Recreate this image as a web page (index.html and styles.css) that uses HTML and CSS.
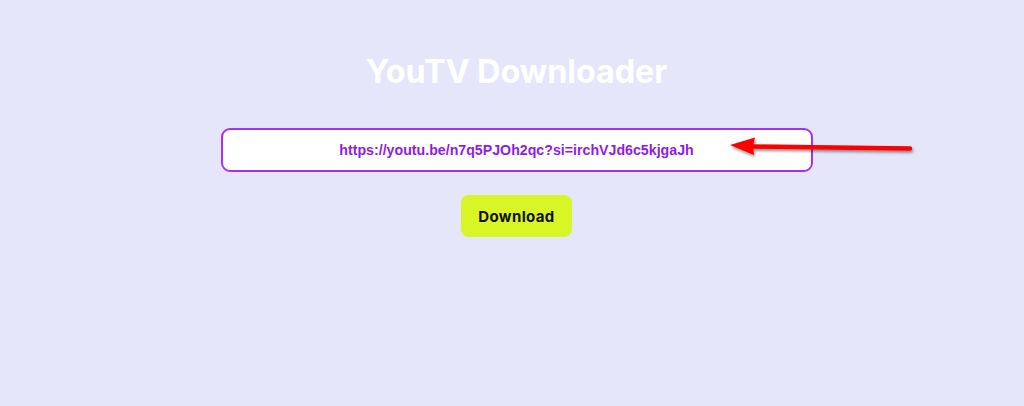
FILE: index.html
```html
<!DOCTYPE html>
<html>
<head>
<meta charset="utf-8">
<link rel="stylesheet" href="styles.css">
</head>
<body>
<main class="page">
  <h1 class="title">YouTV Downloader</h1>
  <div class="field-wrap">
    <div class="url-input">https://youtu.be/n7q5PJOh2qc?si=irchVJd6c5kjgaJh</div>
    <svg class="arrow" width="200" height="30" viewBox="0 0 200 30">
      <defs>
        <filter id="sh" x="-10%" y="-50%" width="120%" height="200%">
          <feGaussianBlur in="SourceAlpha" stdDeviation="1.5"/>
          <feOffset dx="1" dy="1.5" result="b"/>
          <feComponentTransfer><feFuncA type="linear" slope="0.45"/></feComponentTransfer>
          <feMerge><feMergeNode/><feMergeNode in="SourceGraphic"/></feMerge>
        </filter>
      </defs>
      <g filter="url(#sh)">
        <line x1="28" y1="14.5" x2="185" y2="16.5" stroke="#ff0000" stroke-width="4.5" stroke-linecap="round"/>
        <polygon points="5,13 30,5.5 28,14.5 29,23" fill="#ff0000"/>
      </g>
    </svg>
  </div>
  <button class="btn">Download</button>
</main>
</body>
</html>
```
FILE: styles.css
```css
html, body {
  margin: 0;
  padding: 0;
}
body {
  background: #e6e6fb;
  width: 1024px;
  height: 406px;
  overflow: hidden;
  font-family: "Liberation Sans", Arial, sans-serif;
}
.page {
  display: flex;
  flex-direction: column;
  align-items: center;
  padding-top: 52px;
  padding-left: 9px;
}
.title {
  margin: 0;
  font-family: Inter, "Open Sans", sans-serif;
  font-weight: 700;
  font-size: 32.4px;
  line-height: 40px;
  color: #ffffff;
  letter-spacing: -0.1px;
}
.field-wrap {
  position: relative;
  margin-top: 36px;
}
.url-input {
  box-sizing: border-box;
  width: 592px;
  height: 44px;
  border: 2px solid #a431f5;
  border-radius: 9px;
  background: #ffffff;
  color: #8f1ce6;
  font-weight: 700;
  font-size: 14.2px;
  display: flex;
  align-items: center;
  justify-content: center;
}
.arrow {
  position: absolute;
  left: 504px;
  top: 4px;
}
.btn {
  margin-top: 23px;
  width: 111px;
  height: 42px;
  border: none;
  border-radius: 8px;
  background: #d8f526;
  color: #111111;
  font-family: Inter, "Open Sans", sans-serif;
  font-weight: 700;
  font-size: 15px;
  letter-spacing: 0.35px;
  padding: 0;
}
```
